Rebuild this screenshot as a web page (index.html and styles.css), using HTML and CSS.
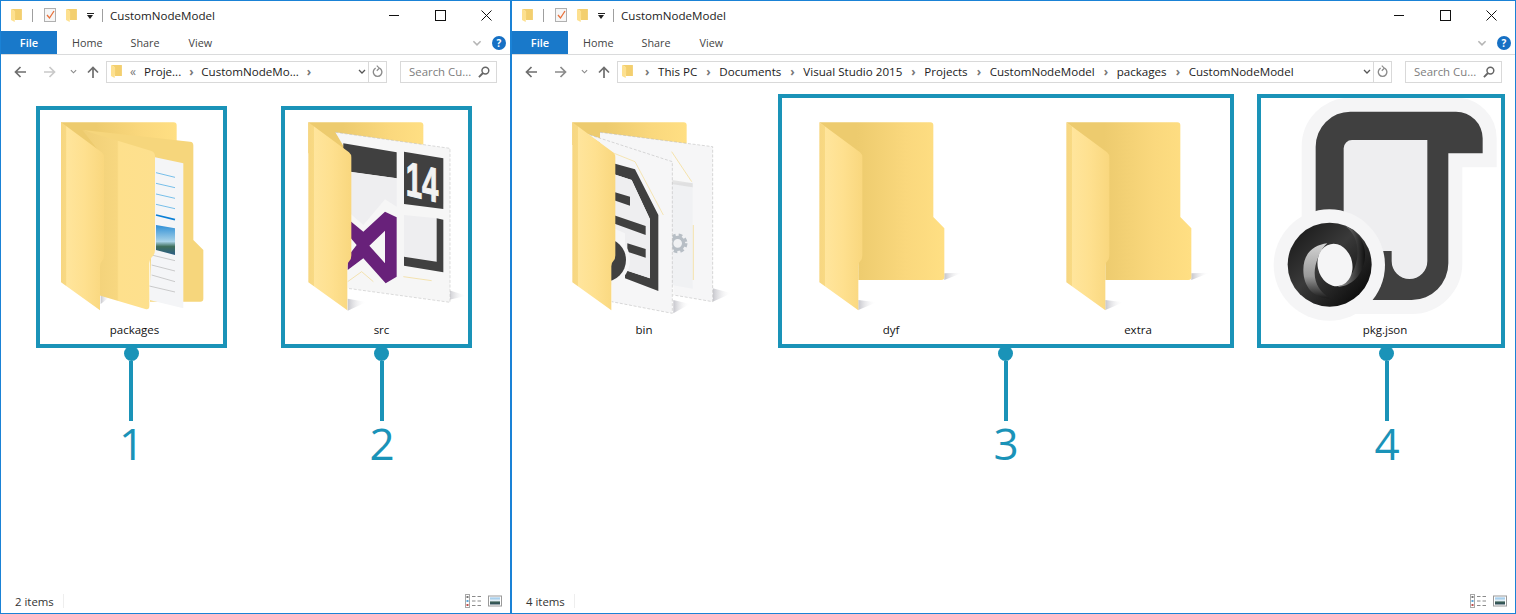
FILE: index.html
```html
<!DOCTYPE html>
<html lang="en">
<head>
    <meta charset="UTF-8">
    <title>CustomNodeModel</title>
    <link rel="stylesheet" href="styles.css">
</head>
<body>
    <!-- shared icon parts -->
    <svg class="svg-defs" xmlns="http://www.w3.org/2000/svg">
        <defs>
            <linearGradient id="gBack"><stop offset="0.3" stop-color="#edcb6e"/><stop offset="0.7" stop-color="#fad87d"/><stop offset="1" stop-color="#ffdf83"/></linearGradient>
            <linearGradient id="gFlap"><stop offset="0" stop-color="#f7d681"/><stop offset="0.12" stop-color="#f8d983"/><stop offset="0.13" stop-color="#ffe59c"/><stop offset="0.55" stop-color="#fee08f"/><stop offset="1" stop-color="#f9d77e"/></linearGradient>
            <linearGradient id="gFlapMid"><stop offset="0" stop-color="#f0cf76"/><stop offset="0.48" stop-color="#f7d780"/><stop offset="0.5" stop-color="#fee08c"/><stop offset="1" stop-color="#fde08e"/></linearGradient>
            <linearGradient id="gShadow"><stop offset="0" stop-color="#c6c6cc"/><stop offset="1" stop-color="#ffffff" stop-opacity="0"/></linearGradient>
            <linearGradient id="gPhoto" x1="0" y1="0" x2="0" y2="1"><stop offset="0" stop-color="#2f8fd6"/><stop offset="0.55" stop-color="#a9d3e8"/><stop offset="0.72" stop-color="#3f6f5c"/><stop offset="1" stop-color="#2b5d86"/></linearGradient>
            <linearGradient id="gThumb" x1="0" y1="0" x2="0" y2="1"><stop offset="0" stop-color="#8cc0e8"/><stop offset="0.45" stop-color="#e6f0f5"/><stop offset="0.65" stop-color="#3d5f55"/><stop offset="1" stop-color="#2b4a58"/></linearGradient>
            <linearGradient id="gRing" x1="0" y1="0" x2="1" y2="1"><stop offset="0" stop-color="#141414"/><stop offset="0.45" stop-color="#3a3a3a"/><stop offset="1" stop-color="#000000"/></linearGradient>
            <linearGradient id="gSwirlLeft" x1="0" y1="0" x2="0" y2="1"><stop offset="0" stop-color="#d4d4d4"/><stop offset="0.6" stop-color="#9a9a9a"/><stop offset="1" stop-color="#1a1a1a"/></linearGradient>
            <linearGradient id="gSwirlRight" x1="0" y1="0" x2="1" y2="0"><stop offset="0" stop-color="#9c9c9c"/><stop offset="1" stop-color="#101010"/></linearGradient>

            <path id="flap" d="M0 0L122 90Q129 96 129 105V399Q129 411 123 416Q117 421 117 432V564L0 480Z"/>
            <g id="folder">
                <path d="M375 453L430 451L375 473Z" fill="url(#gShadow)"/>
                <path d="M117 563L172 540L117 533Z" fill="url(#gShadow)"/>
                <path d="M0 0H333a9 9 0 0 1 9 9V284L375 318V464a9 9 0 0 1-9 9H117V100Z" fill="url(#gBack)"/>
                <use href="#flap" fill="url(#gFlap)"/>
            </g>
            <symbol id="iconFolderSmall" viewBox="0 0 345 564" preserveAspectRatio="none">
                <path d="M0 0H333a9 9 0 0 1 9 9V473H117V100Z" fill="#f3cf6f"/>
                <use href="#flap" fill="#fde08f"/>
            </symbol>
            <symbol id="iconBack" viewBox="0 0 12 12"><path d="M12 6H1.5M6.5 1L1.5 6L6.5 11" fill="none" stroke="currentColor" stroke-width="1.7"/></symbol>
            <symbol id="iconUp" viewBox="0 0 12 12"><path d="M6 12V1.5M1 6.5L6 1.5L11 6.5" fill="none" stroke="currentColor" stroke-width="1.7"/></symbol>
            <symbol id="iconChevron" viewBox="0 0 8 5"><path d="M1 1L4 4L7 1" fill="none" stroke="currentColor" stroke-width="1.3"/></symbol>
            <symbol id="iconRefresh" viewBox="0 0 12 14"><path d="M4 3.400A4.700 4.700 0 1 0 8.200 3.400" fill="none" stroke="currentColor" stroke-width="1.500"/><path d="M5.200 0.6L8 3.400L5.200 6.200" fill="none" stroke="currentColor" stroke-width="1.300"/></symbol>
            <symbol id="iconSearch" viewBox="0 0 13 13"><circle cx="8" cy="5" r="3.7" fill="none" stroke="currentColor" stroke-width="1.6"/><path d="M5.4 7.6L1 12" stroke="currentColor" stroke-width="2"/></symbol>
            <symbol id="iconCheck" viewBox="0 0 13 14"><rect x="0.5" y="0.5" width="11" height="13" fill="#f6f6f6" stroke="#b0b0b0"/><path d="M3 7L5.5 10L10 3" fill="none" stroke="#e8703a" stroke-width="1.3"/></symbol>
            <symbol id="iconDetails" viewBox="0 0 16 14"><rect x="0.5" y="0.5" width="4" height="13" fill="#fff" stroke="#a8a8a8"/><rect x="1.500" y="2" width="2" height="2" fill="#777"/><rect x="1.500" y="6" width="2" height="2" fill="#5aa5d8"/><rect x="1.500" y="10" width="2" height="2" fill="#c0504d"/><path d="M7 2.5H10.500M12.500 2.5H16M7 7H10.500M12.500 7H16M7 11.500H10.500M12.500 11.500H16" stroke="#8a8a8a"/></symbol>
            <symbol id="iconLarge" viewBox="0 0 14 11"><rect x="0.5" y="0.5" width="13" height="10" fill="#fff" stroke="#9a9a9a"/><rect x="2" y="2" width="10" height="7" fill="url(#gThumb)"/></symbol>
        </defs>
    </svg>

    <div class="desktop">
        <!-- left window -->
        <section class="window window-left">
            <div class="titlebar">
                <div class="quick">
                    <svg class="ico-folder"><use href="#iconFolderSmall"/></svg>
                    <span class="quick-sep"></span>
                    <svg class="ico-check"><use href="#iconCheck"/></svg>
                    <svg class="ico-folder"><use href="#iconFolderSmall"/></svg>
                    <span class="quick-caret"></span>
                    <span class="quick-sep quick-sep-last"></span>
                </div>
                <span class="title">CustomNodeModel</span>
                <div class="caption">
                    <span class="cap-btn"><span class="cap-min"></span></span>
                    <span class="cap-btn"><span class="cap-max"></span></span>
                    <span class="cap-btn"><svg class="cap-close" viewBox="0 0 11 11"><path d="M0.5 0.5L10.500 10.500M10.500 0.5L0.5 10.500"/></svg></span>
                </div>
            </div>
            <div class="ribbon">
                <span class="tab-file">File</span>
                <span class="tab tab-home">Home</span>
                <span class="tab tab-share">Share</span>
                <span class="tab">View</span>
                <svg class="ribbon-chevron"><use href="#iconChevron"/></svg>
                <span class="help">?</span>
            </div>
            <div class="navbar">
                <svg class="nav-arrow"><use href="#iconBack"/></svg>
                <svg class="nav-arrow nav-off"><use href="#iconBack"/></svg>
                <svg class="nav-recent"><use href="#iconChevron"/></svg>
                <svg class="nav-arrow nav-up"><use href="#iconUp"/></svg>
                <div class="address">
                    <svg class="ico-folder"><use href="#iconFolderSmall"/></svg>
                    <div class="crumbs crumbs-short">
                        <span class="crumb-more">&laquo;</span>
                        <span>Proje...</span>
                        <span class="crumb-sep">&rsaquo;</span>
                        <span>CustomNodeMo...</span>
                        <span class="crumb-sep">&rsaquo;</span>
                    </div>
                    <svg class="addr-drop"><use href="#iconChevron"/></svg>
                    <span class="addr-refresh"><svg><use href="#iconRefresh"/></svg></span>
                </div>
                <div class="search">
                    <span>Search Cu...</span>
                    <svg><use href="#iconSearch"/></svg>
                </div>
            </div>
            <div class="content content-left">
                <div class="callout">
                    <div class="frame">
                        <div class="file">
                            <svg class="icon-sm" viewBox="30 30 549 636">
                                <path d="M93 67H431a9 9 0 0 1 9 9V130H300V400H93Z" fill="url(#gBack)"/>
                                <path d="M160 90L480 125Q490 126 490 136V420L520 450V596a9 9 0 0 1-9 9H360V180Z" fill="#f6d67c"/>
                                <path d="M375 172L460 190V625L358 600Z" fill="#f4f5f7"/>
                                <g stroke="#5db3e6" stroke-width="2.500">
                                    <path d="M378 218L435 232M378 250L435 263M378 282L435 295M378 313L435 326"/>
                                    <path d="M378 345L435 359" stroke="#0a7fd6" stroke-width="5"/>
                                </g>
                                <path d="M378 375L435 385V465L378 450Z" fill="url(#gPhoto)"/>
                                <path d="M365 465L435 482M365 495L435 513M365 525L435 545M358 558L435 576" stroke="#b4b4b4" stroke-width="2"/>
                                <path d="M212 612L240 590L212 585Z" fill="url(#gShadow)"/>
                                <path d="M157 90L362 152Q375 156 375 168V450Q375 465 365 472Q358 480 358 490V618Q358 630 346 627L204 585V150Z" fill="url(#gFlapMid)"/>
                                <use href="#flap" x="93" y="67" fill="url(#gFlap)"/>
                            </svg>
                            <span class="file-name name-packages">packages</span>
                        </div>
                    </div>
                    <div class="marker">
                        <span class="marker-dot"></span>
                        <span class="marker-stem"></span>
                        <span class="marker-num">1</span>
                    </div>
                </div>

                <div class="callout">
                    <div class="frame">
                        <div class="file">
                            <svg class="icon-sm" viewBox="30 30 549 636">
                                <path d="M520 600L575 587L520 570Z" fill="url(#gShadow)"/>
                                <path d="M100 67H436a9 9 0 0 1 9 9V160H100Z" fill="url(#gBack)"/>
                                <path d="M181 97L525 145V607L218 565V160Z" fill="#f6f6f6"/>
                                <path d="M181 97L525 145V607L218 565" fill="none" stroke="#b9b9b9" stroke-width="1.500" stroke-dasharray="9 5"/>
                                <path d="M205 130L365 157V235L205 212Z" fill="#404040"/>
                                <path d="M220 215L365 235V320L330 298L265 375L220 335Z" fill="#eeeef0"/>
                                <path d="M387 155L505 175V327L387 312Z" fill="#404040"/>
                                <text class="vs-year" transform="matrix(0.61 0.14 0 1 392 285)">14</text>
                                <path d="M387 345L485 355V485L387 470Z" fill="#eeeef0"/>
                                <path d="M485 355L505 359V517L387 497V470L485 485Z" fill="#404040"/>
                                <path fill-rule="evenodd" d="M330 335L365 352V530L332 550L265 475L218 510V470L245 435L225 412V362L265 395ZM330 392V490L283 437Z" fill="#68217a"/>
                                <path d="M218 545L260 515L295 545M385 530L470 542" fill="none" stroke="#f1d88d" stroke-width="2"/>
                                <path d="M218 632L275 606L218 596Z" fill="url(#gShadow)"/>
                                <use href="#flap" x="100" y="67" fill="url(#gFlap)"/>
                            </svg>
                            <span class="file-name name-src">src</span>
                        </div>
                    </div>
                    <div class="marker marker-shift-11">
                        <span class="marker-dot"></span>
                        <span class="marker-stem"></span>
                        <span class="marker-num">2</span>
                    </div>
                </div>
            </div>
            <div class="statusbar">
                <span class="status-count">2 items</span>
                <span class="status-sep"></span>
                <svg class="view-details"><use href="#iconDetails"/></svg>
                <svg class="view-large"><use href="#iconLarge"/></svg>
            </div>
        </section>

        <!-- right window -->
        <section class="window window-right">
            <div class="titlebar">
                <div class="quick">
                    <svg class="ico-folder"><use href="#iconFolderSmall"/></svg>
                    <span class="quick-sep"></span>
                    <svg class="ico-check"><use href="#iconCheck"/></svg>
                    <svg class="ico-folder"><use href="#iconFolderSmall"/></svg>
                    <span class="quick-caret"></span>
                    <span class="quick-sep quick-sep-last"></span>
                </div>
                <span class="title">CustomNodeModel</span>
                <div class="caption">
                    <span class="cap-btn"><span class="cap-min"></span></span>
                    <span class="cap-btn"><span class="cap-max"></span></span>
                    <span class="cap-btn"><svg class="cap-close" viewBox="0 0 11 11"><path d="M0.5 0.5L10.500 10.500M10.500 0.5L0.5 10.500"/></svg></span>
                </div>
            </div>
            <div class="ribbon">
                <span class="tab-file">File</span>
                <span class="tab tab-home">Home</span>
                <span class="tab tab-share">Share</span>
                <span class="tab">View</span>
                <svg class="ribbon-chevron"><use href="#iconChevron"/></svg>
                <span class="help">?</span>
            </div>
            <div class="navbar">
                <svg class="nav-arrow"><use href="#iconBack"/></svg>
                <svg class="nav-arrow nav-off nav-forward-dark"><use href="#iconBack"/></svg>
                <svg class="nav-recent"><use href="#iconChevron"/></svg>
                <svg class="nav-arrow nav-up"><use href="#iconUp"/></svg>
                <div class="address">
                    <svg class="ico-folder"><use href="#iconFolderSmall"/></svg>
                    <div class="crumbs crumbs-full">
                        <span class="crumb-sep">&rsaquo;</span>
                        <span>This PC</span>
                        <span class="crumb-sep">&rsaquo;</span>
                        <span>Documents</span>
                        <span class="crumb-sep">&rsaquo;</span>
                        <span>Visual Studio 2015</span>
                        <span class="crumb-sep">&rsaquo;</span>
                        <span>Projects</span>
                        <span class="crumb-sep">&rsaquo;</span>
                        <span>CustomNodeModel</span>
                        <span class="crumb-sep">&rsaquo;</span>
                        <span>packages</span>
                        <span class="crumb-sep">&rsaquo;</span>
                        <span>CustomNodeModel</span>
                    </div>
                    <svg class="addr-drop"><use href="#iconChevron"/></svg>
                    <span class="addr-refresh"><svg><use href="#iconRefresh"/></svg></span>
                </div>
                <div class="search">
                    <span>Search Cu...</span>
                    <svg><use href="#iconSearch"/></svg>
                </div>
            </div>
            <div class="content content-right">
                <div class="callout">
                    <div class="frame frame-bare">
                        <div class="file">
                            <svg class="icon-bin" viewBox="0 -6 624 672">
                                <path d="M518 605L575 580L518 565Z" fill="url(#gShadow)"/>
                                <path d="M400 640L450 612L400 600Z" fill="url(#gShadow)"/>
                                <path d="M97 67H431a9 9 0 0 1 9 9V135H97Z" fill="url(#gBack)"/>
                                <path d="M180 97L518 140V605L400 585V300L180 220Z" fill="#f6f6f7"/>
                                <path d="M180 97L518 140V605L400 585" fill="none" stroke="#b5b5b5" stroke-width="1.500" stroke-dasharray="9 5"/>
                                <path d="M395 155L458 248V566L395 555Z" fill="#f0f1f3"/>
                                <path d="M395 155L458 248H395Z" fill="#f8f8f8"/>
                                <path d="M395 240L458 250V262L395 252Z" fill="#cfcfcf" opacity="0.5"/>
                                <path d="M395 155L455 245M460 375V540" fill="none" stroke="#f5d987" stroke-width="2"/>
                                <circle cx="413" cy="430" r="18" fill="none" stroke="#b7bec5" stroke-width="10"/>
                                <circle cx="413" cy="430" r="25" fill="none" stroke="#b7bec5" stroke-width="9" stroke-dasharray="11 9"/>
                                <path d="M135 100L397 185V640L215 605V150Z" fill="#f6f6f7"/>
                                <path d="M135 100L397 185V640L215 605" fill="none" stroke="#b5b5b5" stroke-width="1.500" stroke-dasharray="9 5"/>
                                <path d="M215 157L285 185L370 345" fill="none" stroke="#f5dc92" stroke-width="2"/>
                                <path d="M220 190L285 208L355 345V573L255 535V510L330 535V358L275 240L220 222Z" fill="#404040"/>
                                <path d="M220 222L275 240L330 358V535L255 510V400L220 385Z" fill="#eeeef0"/>
                                <path d="M220 275L270 290V317L220 300ZM220 345L317 378V405L220 370ZM262 430L317 447V473L262 455Z" fill="#404040"/>
                                <circle cx="192" cy="480" r="78" fill="#f6f6f7"/>
                                <circle cx="192" cy="480" r="66" fill="#404040"/>
                                <use href="#flap" x="97" y="67" fill="url(#gFlap)"/>
                            </svg>
                            <span class="file-name">bin</span>
                        </div>
                    </div>
                </div>

                <div class="callout">
                    <div class="frame frame-pair">
                        <div class="file file-plain">
                            <svg class="icon-plain" viewBox="33 -6 540 672"><use href="#folder" x="88" y="67"/></svg>
                            <span class="file-name">dyf</span>
                        </div>
                        <div class="file file-plain">
                            <svg class="icon-plain" viewBox="33 -6 540 672"><use href="#folder" x="88" y="67"/></svg>
                            <span class="file-name">extra</span>
                        </div>
                    </div>
                    <div class="marker">
                        <span class="marker-dot"></span>
                        <span class="marker-stem"></span>
                        <span class="marker-num">3</span>
                    </div>
                </div>

                <div class="callout">
                    <div class="frame">
                        <div class="file">
                            <svg class="icon-json" viewBox="33 24 720 672">
                                <path d="M197 400V170A104 105 0 0 1 301 65H618A80 80 0 0 1 698 145V190H595V520A110 110 0 0 1 485 630H300Z" fill="none" stroke="#f5f5f6" stroke-width="84" stroke-linejoin="miter"/>
                                <path d="M197 400V170A104 105 0 0 1 301 65H618A80 80 0 0 1 698 145V190H595V520A110 110 0 0 1 485 630H300Z" fill="#404040"/>
                                <path d="M281 400V175A25 25 0 0 1 306 150H532V513A53.500 54 0 0 1 425 513V483H300Z" fill="#eeeef0"/>
                                <circle cx="238" cy="525" r="167" fill="#f5f5f6"/>
                                <circle cx="239" cy="524" r="126" fill="url(#gRing)"/>
                                <path d="M232 460C190 465 160 490 160 540C160 590 190 625 240 625C200 600 180 560 205 500C212 482 222 468 232 460Z" fill="url(#gSwirlLeft)"/>
                                <path d="M285 408C320 430 330 480 318 520C310 555 285 585 262 590C300 590 340 560 345 500C348 455 320 420 285 408Z" fill="url(#gSwirlRight)"/>
                                <ellipse cx="255" cy="525" rx="52" ry="64" fill="#f5f5f6" transform="rotate(-12 255 525)"/>
                            </svg>
                            <span class="file-name name-json">pkg.json</span>
                        </div>
                    </div>
                    <div class="marker marker-shift-12">
                        <span class="marker-dot"></span>
                        <span class="marker-stem"></span>
                        <span class="marker-num">4</span>
                    </div>
                </div>
            </div>
            <div class="statusbar">
                <span class="status-count">4 items</span>
                <span class="status-sep"></span>
                <svg class="view-details"><use href="#iconDetails"/></svg>
                <svg class="view-large"><use href="#iconLarge"/></svg>
            </div>
        </section>
    </div>
</body>
</html>
```

FILE: styles.css
```css
body {
    margin: 0;
    padding: 0;
    background-color: white;
    color: #222;
    font-family: "Open Sans", "Noto Sans", sans-serif;
    font-size: 11.5px;
}
.svg-defs {
    display: block;
    width: 0;
    height: 0;
}
.desktop {
    display: flex;
    height: 614px;
    overflow: hidden;
}
.window {
    display: flex;
    flex-direction: column;
    box-sizing: border-box;
    height: 614px;
    border: 1px solid #1a82d6;
    background-color: white;
}
.window-left {
    width: 511px;
}
.window-right {
    width: 1005px;
}

/* Title bar */
.titlebar {
    display: flex;
    align-items: center;
    flex-shrink: 0;
    box-sizing: border-box;
    height: 30px;
    padding-bottom: 2px;
}
.quick {
    display: flex;
    align-items: center;
    padding-left: 10px;
}
.ico-folder {
    width: 11px;
    height: 13px;
    flex-shrink: 0;
}
.ico-check {
    width: 13px;
    height: 14px;
    margin: 0 9px 0 11px;
}
.quick-sep {
    width: 1px;
    height: 13px;
    margin-left: 10px;
    background-color: #9f9f9f;
}
.quick-sep-last {
    margin-left: 8px;
}
.quick-caret {
    width: 7px;
    height: 5px;
    margin-left: 10px;
    border-top: 1px solid #222;
    position: relative;
    box-sizing: border-box;
}
.quick-caret::after {
    content: "";
    position: absolute;
    left: 0;
    top: 1px;
    border-left: 3.5px solid transparent;
    border-right: 3.5px solid transparent;
    border-top: 4px solid #222;
}
.title {
    margin-left: 7px;
    font-size: 11.6px;
}
.caption {
    display: flex;
    margin-left: auto;
    padding-right: 1px;
}
.cap-btn {
    display: flex;
    align-items: center;
    justify-content: center;
    width: 46px;
    height: 28px;
}
.cap-min {
    width: 10px;
    height: 1px;
    background-color: #111;
}
.cap-max {
    box-sizing: border-box;
    width: 11px;
    height: 11px;
    border: 1px solid #111;
}
.cap-close {
    width: 11px;
    height: 11px;
    fill: none;
    stroke: #111;
    stroke-width: 1;
}

/* Ribbon tabs */
.ribbon {
    display: flex;
    align-items: center;
    flex-shrink: 0;
    height: 24px;
    border-bottom: 1px solid #dadbdc;
    box-sizing: border-box;
}
.tab-file {
    display: flex;
    align-items: center;
    justify-content: center;
    width: 56px;
    height: 23px;
    background-color: #1979ca;
    color: white;
    font-weight: 600;
    font-size: 11px;
}
.tab {
    color: #444;
    font-size: 10.8px;
}
.tab-home {
    margin-left: 15px;
}
.tab-share {
    margin-left: 28px;
    margin-right: 29px;
}
.ribbon-chevron {
    width: 10px;
    height: 6px;
    margin-left: auto;
    color: #b5b5b5;
}
.help {
    display: flex;
    align-items: center;
    justify-content: center;
    width: 14px;
    height: 14px;
    margin: 0 4px 0 10px;
    border-radius: 50%;
    background-color: #1670c4;
    color: white;
    font-weight: 700;
    font-size: 10px;
}

/* Navigation row */
.navbar {
    display: flex;
    align-items: center;
    flex-shrink: 0;
    box-sizing: border-box;
    height: 35px;
    padding-bottom: 2px;
}
.nav-arrow {
    width: 12px;
    height: 12px;
    margin-left: 13px;
    color: #6e6e6e;
}
.nav-off {
    margin-left: 18px;
    color: #c9c9c9;
    transform: scaleX(-1);
}
.nav-forward-dark {
    color: #8a8a8a;
}
.nav-recent {
    width: 7px;
    height: 5px;
    margin-left: 14px;
    color: #8a8a8a;
}
.nav-up {
    margin-left: 10px;
}
.address {
    display: flex;
    align-items: center;
    flex: 1;
    box-sizing: border-box;
    height: 22px;
    margin-left: 7px;
    padding-left: 4px;
    border: 1px solid #d9d9d9;
    font-size: 11.6px;
    min-width: 0;
}
.crumbs {
    display: flex;
    align-items: center;
    gap: 8px;
    margin-left: 8px;
    white-space: nowrap;
}
.crumbs-full {
    gap: 9px;
    margin-left: 12px;
}
.crumb-sep {
    width: 4px;
    color: #777;
    font-size: 12px;
    font-weight: 700;
}
.crumb-more {
    color: #777;
    font-size: 12px;
}
.addr-drop {
    width: 8px;
    height: 5px;
    margin-left: auto;
    color: #555;
}
.addr-refresh {
    display: flex;
    align-items: center;
    justify-content: center;
    width: 17px;
    height: 20px;
    margin-left: 2px;
    border-left: 1px solid #d9d9d9;
    color: #8a8a8a;
}
.addr-refresh svg {
    width: 11px;
    height: 13px;
}
.search {
    display: flex;
    align-items: center;
    justify-content: space-between;
    box-sizing: border-box;
    width: 97px;
    height: 22px;
    margin: 0 13px;
    padding: 0 6px 0 8px;
    border: 1px solid #d9d9d9;
    color: #7d7d7d;
    font-size: 11.4px;
}
.search svg {
    width: 12px;
    height: 12px;
    color: #666;
}

/* File area */
.content {
    display: flex;
    align-items: flex-start;
    flex: 1;
    min-height: 0;
    overflow: hidden;
}
.content-left {
    gap: 54px;
    padding: 16px 0 0 35px;
}
.content-right {
    padding: 4px 0 0 24px;
    gap: 26px;
}
.callout {
    display: flex;
    flex-direction: column;
    align-items: center;
}
.frame {
    display: flex;
    box-sizing: border-box;
    border: 4px solid #1a93b8;
    background-color: white;
}
.frame-bare {
    border-color: transparent;
}
.frame-pair {
    gap: 67px;
    padding-left: 19px;
    width: 456px;
}
.content-right .callout:last-child {
    margin-left: -3px;
}
.file {
    display: flex;
    flex-direction: column;
    align-items: center;
}
.file svg {
    display: block;
}
.icon-sm {
    width: 183px;
    height: 212px;
}
.icon-bin {
    width: 208px;
    height: 224px;
}
.icon-plain {
    width: 180px;
    height: 224px;
}
.icon-json {
    width: 240px;
    height: 224px;
}
.vs-year {
    font-family: "Liberation Sans", sans-serif;
    font-weight: 700;
    font-size: 145px;
    fill: #f2f2f2;
    stroke: #f2f2f2;
    stroke-width: 3;
}
.file-name {
    height: 16px;
    margin-bottom: 6px;
    line-height: 16px;
    color: #111;
    font-size: 11.5px;
}
.name-packages {
    padding-left: 6px;
}
.name-src {
    padding-left: 10px;
}
.name-json {
    padding-left: 8px;
}

/* Numbered callouts */
.marker {
    display: flex;
    flex-direction: column;
    align-items: center;
    margin-top: -2px;
    color: #1a93b8;
}
.marker-shift-11 {
    margin-left: 11px;
}
.marker-shift-12 {
    margin-left: 12px;
}
.marker-dot {
    width: 15px;
    height: 15px;
    border-radius: 50%;
    background-color: #1a93b8;
}
.marker-stem {
    width: 4px;
    height: 60px;
    background-color: #1a93b8;
}
.marker-num {
    font-size: 44px;
    line-height: 44px;
}

/* Status bar */
.statusbar {
    display: flex;
    align-items: center;
    flex-shrink: 0;
    box-sizing: border-box;
    height: 22px;
    padding-bottom: 2px;
    color: #333;
    font-size: 11.4px;
}
.status-count {
    margin-left: 14px;
}
.status-sep {
    width: 1px;
    height: 14px;
    margin-left: 9px;
    background-color: #eeeeee;
}
.view-details {
    width: 16px;
    height: 14px;
    margin-left: auto;
}
.view-large {
    width: 14px;
    height: 12px;
    margin: 0 8px 0 7px;
}
```
